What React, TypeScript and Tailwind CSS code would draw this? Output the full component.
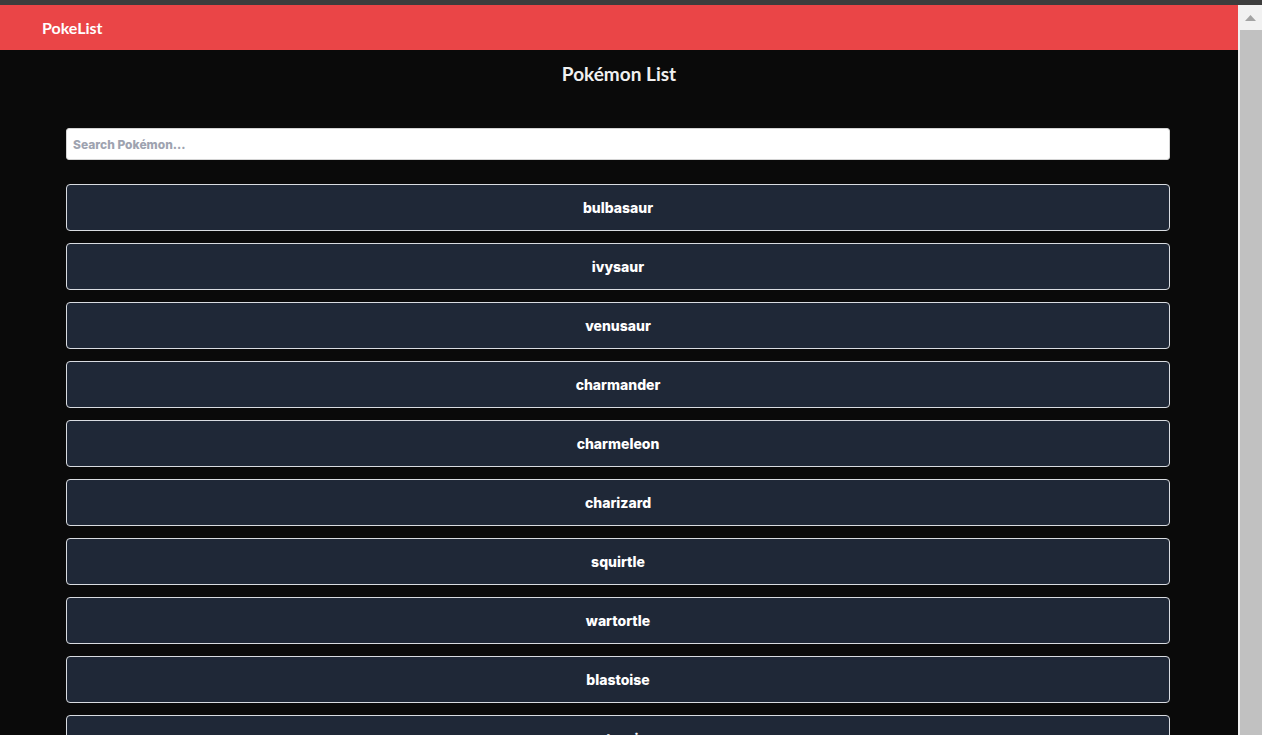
import React, { useState } from "react";

const pokemon = [
  "bulbasaur",
  "ivysaur",
  "venusaur",
  "charmander",
  "charmeleon",
  "charizard",
  "squirtle",
  "wartortle",
  "blastoise",
  "caterpie",
  "metapod",
  "butterfree",
];

export default function App() {
  const [query, setQuery] = useState("");
  const list = pokemon.filter((p) => p.includes(query.toLowerCase()));

  return (
    <div className="flex h-[735px] w-[1262px] flex-col overflow-hidden bg-[#0a0a0a]">
      {/* browser strip */}
      <div className="h-[5px] shrink-0 bg-[#3d3d3d]" />

      <div className="flex min-h-0 flex-1">
        {/* page */}
        <div className="min-w-0 flex-1 overflow-hidden">
          <header className="flex h-[45px] items-center bg-[#ea4547] pl-[42px]">
            <span className="text-[16px] font-bold text-white [font-family:Lato,'Noto_Sans',sans-serif]">
              PokeList
            </span>
          </header>

          <h1 className="mt-[10px] text-center text-[19px] font-bold leading-[28px] text-[#f0f0f0] [font-family:Lato,'Noto_Sans',sans-serif]">
            Pokémon List
          </h1>

          <div className="ml-[66px] mt-[40px] w-[1104px]">
            <input
              type="text"
              value={query}
              onChange={(e) => setQuery(e.target.value)}
              placeholder="Search Pokémon..."
              className="h-[32px] w-full rounded-[3px] border border-[#d4d4d4] bg-white px-[6px] text-[12px] font-extrabold text-gray-800 outline-none placeholder:text-[#9ea3b0] [font-family:Inter,'Noto_Sans',sans-serif]"
            />

            <ul className="mt-[24px] flex flex-col gap-[12px]">
              {list.map((name) => (
                <li
                  key={name}
                  className="flex h-[47px] items-center justify-center rounded-[4px] border border-[#d9dce1] bg-[#1f2837] text-[14px] font-extrabold text-white [font-family:Inter,'Noto_Sans',sans-serif]"
                >
                  {name}
                </li>
              ))}
            </ul>
          </div>
        </div>

        {/* scrollbar */}
        <div className="flex w-[24px] shrink-0 flex-col bg-[#f1f1f1] pl-[2px]">
          <div className="flex h-[25px] items-center justify-center pr-[2px]">
            <svg width="11" height="6" viewBox="0 0 11 6">
              <polygon points="5.5,0 11,6 0,6" fill="#a3a3a3" />
            </svg>
          </div>
          <div className="flex-1 bg-[#c1c1c1]" />
        </div>
      </div>
    </div>
  );
}
